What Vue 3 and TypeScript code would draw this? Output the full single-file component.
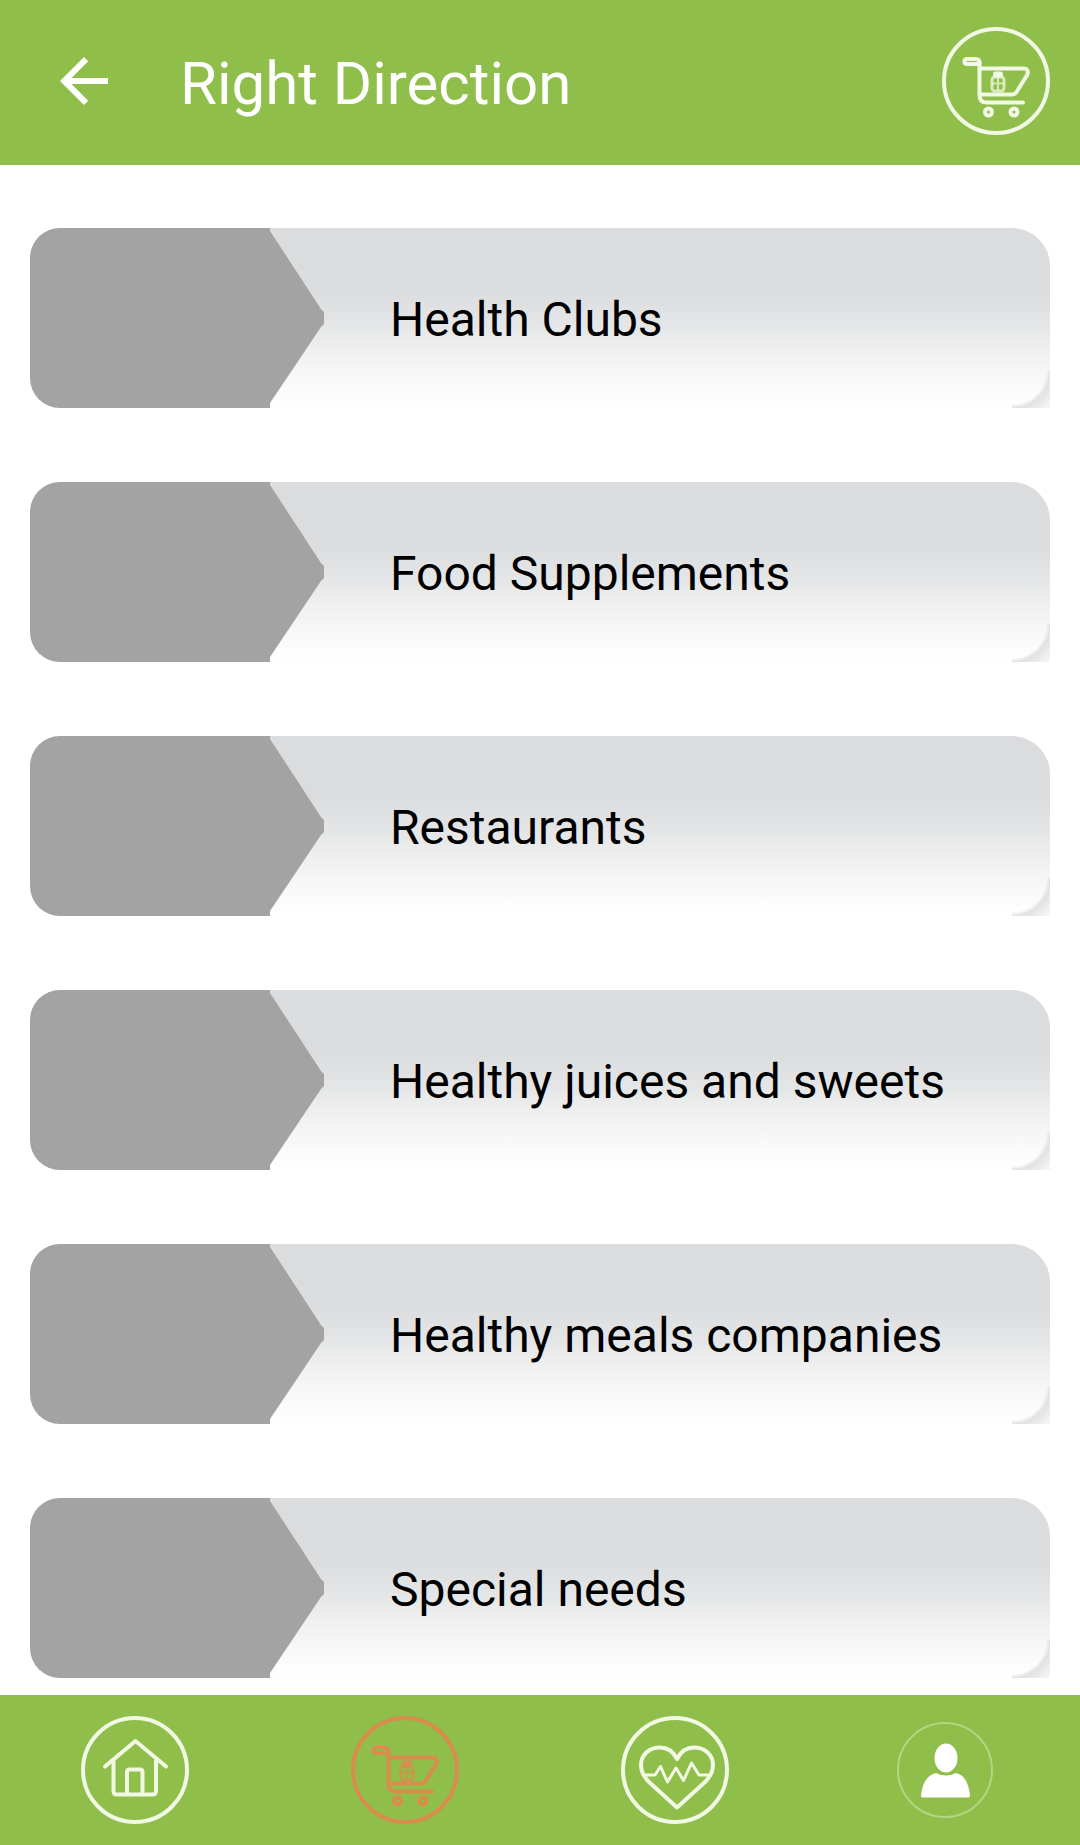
<script setup lang="ts">
interface Category {
  id: number
  label: string
}

const categories: Category[] = [
  { id: 1, label: 'Health Clubs' },
  { id: 2, label: 'Food Supplements' },
  { id: 3, label: 'Restaurants' },
  { id: 4, label: 'Healthy juices and sweets' },
  { id: 5, label: 'Healthy meals companies' },
  { id: 6, label: 'Special needs' },
]
</script>

<template>
  <div class="screen">
    <!-- Cart drawing shared by the header and the bottom bar -->
    <svg class="defs" aria-hidden="true">
      <symbol id="cart" viewBox="0 0 108 108">
        <g fill="none" stroke="currentColor" stroke-linecap="round" stroke-linejoin="round">
          <circle cx="54" cy="54" r="52" stroke-width="4" />
          <path stroke-width="4" d="M36 37H25q-2.500 0-2.500-2.500T25 32h9q3.500 0 3.500 4" />
          <path stroke-width="4" d="M37.500 35v33q0 7.500 7 7.500H81" />
          <path stroke-width="4" d="M38 41.500h44q5 .5 3.500 6L74.500 65q-1.500 2.500-4.500 2.500H38" />
          <circle cx="46.500" cy="85" r="3.500" stroke-width="4" />
          <circle cx="72" cy="85" r="3.500" stroke-width="4" />
          <rect x="50" y="50" width="12" height="14" rx="3" stroke-width="3" opacity=".75" />
          <path d="M51 56.500h10M56 51v12" stroke-width="2" opacity=".7" />
        </g>
        <rect x="51" y="44.500" width="10" height="6" rx="2.500" fill="currentColor" />
      </symbol>
    </svg>

    <header class="bar">
      <button class="back" type="button" aria-label="Back">
        <svg viewBox="0 0 24 24" width="72" height="72" aria-hidden="true">
          <path fill="currentColor" d="M20 11H7.830l5.590-5.590L12 4l-8 8 8 8 1.410-1.410L7.830 13H20z" />
        </svg>
      </button>
      <h1 class="title">Right Direction</h1>
      <button class="round" type="button" aria-label="Cart">
        <svg class="icon" aria-hidden="true"><use href="#cart" /></svg>
      </button>
    </header>

    <main class="content">
      <ul class="list">
        <li v-for="category in categories" :key="category.id">
          <button class="card" type="button">
            <span class="thumb"></span>
            <span class="panel">{{ category.label }}</span>
          </button>
        </li>
      </ul>
    </main>

    <nav class="tabs">
      <a class="tab" href="#home" aria-label="Home">
        <svg class="icon" viewBox="0 0 108 108" aria-hidden="true">
          <g fill="none" stroke="currentColor" stroke-linecap="round" stroke-linejoin="round" stroke-width="4">
            <circle cx="54" cy="54" r="52" />
            <path d="M24 50.500L54.500 25 85 50.500" />
            <path d="M32.500 45v30q0 3.500 3.500 3.500h35.500q3.500 0 3.500-3.500V45" />
            <path d="M46 78V56q0-2.500 2.500-2.500h10.500q2.500 0 2.500 2.500v22" />
          </g>
        </svg>
      </a>
      <a class="tab active" href="#shop" aria-label="Shop" aria-current="page">
        <svg class="icon" aria-hidden="true"><use href="#cart" /></svg>
      </a>
      <a class="tab" href="#health" aria-label="Health">
        <svg class="icon" viewBox="0 0 108 108" aria-hidden="true">
          <g fill="none" stroke="currentColor" stroke-linecap="round" stroke-linejoin="round">
            <circle cx="54" cy="54" r="52" stroke-width="4" />
            <path stroke-width="4" d="M56 43C52 35 46 31.500 39 31.500 28 31.500 20 39 20 49c0 7 3 12 8 17l28 25.500L84 66c5-5 8-10 8-17 0-10-8-17.500-19-17.500-7 0-13 3.500-17 11.500z" />
            <path stroke-width="3" d="M24 59h10l5.500-8.500L46.500 66l8.500-14 7.500 12.500L70.500 47 78 59h10" />
          </g>
        </svg>
      </a>
      <a class="tab" href="#profile" aria-label="Profile">
        <svg class="icon" viewBox="0 0 108 108" aria-hidden="true">
          <circle cx="54" cy="54" r="47" fill="none" stroke="#b4d682" stroke-width="2" />
          <ellipse cx="55" cy="42" rx="11.500" ry="14.500" fill="#fff" />
          <path fill="#fff" d="M45 57q10 5 20 0c8 2 12 8 14 22q.5 2.500-2 2.500H32q-2.500 0-2-2.500C32 65 37 59 45 57z" />
        </svg>
      </a>
    </nav>
  </div>
</template>

<style>
body {
  margin: 0;
  background: #fff;
}
</style>

<style scoped>
.screen {
  display: flex;
  flex-direction: column;
  min-height: 100vh;
  background: #fff;
  font-family: Roboto, "Noto Sans", sans-serif;
}

.defs {
  position: absolute;
  width: 0;
  height: 0;
}

button {
  margin: 0;
  padding: 0;
  border: 0;
  background: none;
  color: inherit;
  font: inherit;
  cursor: pointer;
}

.bar {
  display: flex;
  align-items: flex-start;
  padding: 27px 30px 24px 48px;
  background: #8fbe4a;
  color: #fff;
}

.back {
  display: flex;
  align-items: center;
  height: 108px;
}

.title {
  flex: 1;
  margin: 0 0 0 60px;
  font-size: 60px;
  font-weight: 400;
  line-height: 114px;
}

.round {
  display: flex;
  color: #f1f9e4;
}

.icon {
  display: block;
  width: 108px;
  height: 108px;
}

.content {
  flex: 1;
  padding: 63px 30px 17px;
}

.list {
  display: flex;
  flex-direction: column;
  gap: 74px;
  margin: 0;
  padding: 0;
  list-style: none;
}

.card {
  display: flex;
  align-items: stretch;
  width: 100%;
  height: 180px;
  color: #000;
  font-size: 48px;
  line-height: 56px;
  text-align: left;
}

.thumb {
  flex: none;
  width: 240px;
  border-radius: 30px 0 0 30px;
  background: #a3a3a3;
}

.panel {
  position: relative;
  display: flex;
  flex: 1;
  align-items: center;
  padding: 4px 0 0 120px;
  border-top-right-radius: 38px;
  background: linear-gradient(#dbdcde 0, #dbdcde 34%, #e5e6e7 55%, #ecedec 64%, #f5f5f5 78%, #fdfdfd 94%, #fff 100%);
}

/* Pointed edge of the thumbnail, laid over the panel */
.panel::before {
  content: "";
  position: absolute;
  top: 0;
  left: 0;
  width: 54px;
  height: 180px;
  background: #a3a3a3;
  clip-path: polygon(0 3px, 51px 81px, 54px 84px, 54px 96px, 51px 99px, 0 175px);
}

/* Shaded corner outside the lower right curve */
.panel::after {
  content: "";
  position: absolute;
  right: 0;
  bottom: 0;
  width: 38px;
  height: 38px;
  background: radial-gradient(circle at 0 0, transparent 34px, #e2e2e3 38px, #f6f6f6 52px);
}

.tabs {
  position: sticky;
  bottom: 0;
  display: flex;
  align-items: center;
  height: 150px;
  background: #8fbe4a;
}

.tab {
  display: flex;
  flex: 1;
  justify-content: center;
  color: #f1f9e4;
}

.tab.active {
  color: #d98c4b;
}
</style>
